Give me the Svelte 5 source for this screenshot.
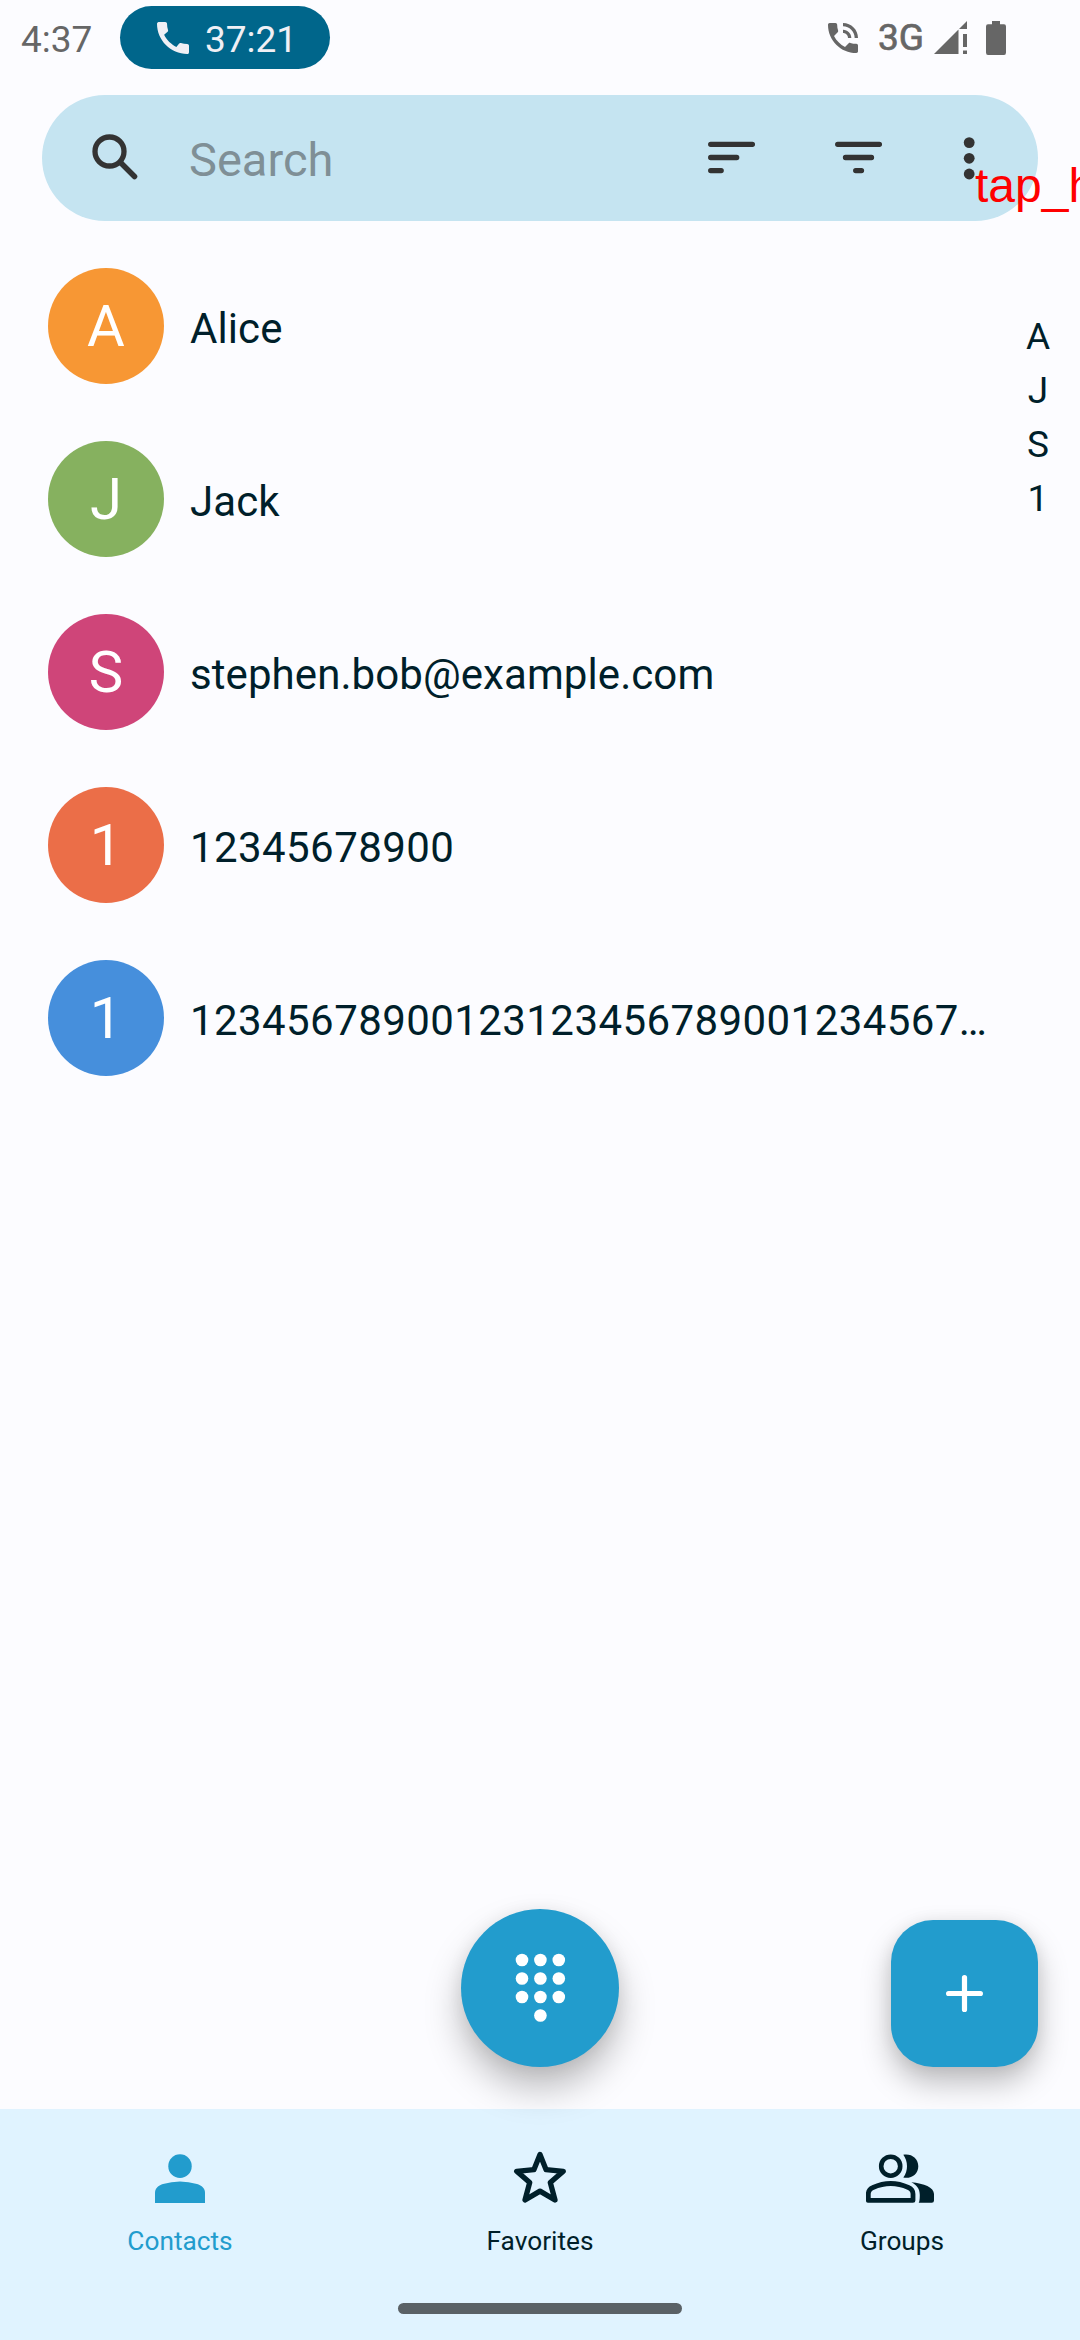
<script>
  const contacts = [
    { initial: 'A', name: 'Alice', tone: 'orange' },
    { initial: 'J', name: 'Jack', tone: 'green' },
    { initial: 'S', name: 'stephen.bob@example.com', tone: 'pink' },
    { initial: '1', name: '12345678900', tone: 'coral', numeric: true },
    { initial: '1', name: '12345678900123123456789001234567…', tone: 'blue', numeric: true }
  ];
  const letters = ['A', 'J', 'S', '1'];
  const keys = [
    [7, 7], [25.4, 7], [43.8, 7],
    [7, 25.5], [25.4, 25.5], [43.8, 25.5],
    [7, 44], [25.4, 44], [43.8, 44],
    [25.4, 62.5]
  ];
</script>

<div class="screen">
  <header class="status">
    <span class="time">4:37</span>
    <div class="call">
      <svg width="32" height="32" viewBox="3 3 18 18"><path fill="currentColor" d="M20.01 15.38c-1.23 0-2.42-.2-3.53-.56-.35-.12-.74-.03-1.01.24l-1.57 1.97c-2.83-1.35-5.48-3.9-6.89-6.83l1.95-1.66c.27-.28.35-.67.24-1.02-.37-1.11-.56-2.3-.56-3.53 0-.54-.45-.99-.99-.99H4.19C3.65 3 3 3.24 3 3.99 3 13.28 10.73 21 20.01 21c.71 0 .99-.63.99-1.18v-3.45c0-.54-.45-.99-.99-.99z"/></svg>
      <span>37:21</span>
    </div>
    <div class="signals">
      <svg class="wifi-call" width="30" height="30" viewBox="3 3 18 18"><path fill="currentColor" d="M20 15.5c-1.25 0-2.45-.2-3.57-.57-.1-.03-.21-.05-.31-.05-.26 0-.51.1-.71.29l-2.2 2.2c-2.83-1.44-5.15-3.75-6.59-6.59l2.2-2.21c.28-.26.36-.65.25-1C8.7 6.45 8.5 5.25 8.5 4c0-.55-.45-1-1-1H4c-.55 0-1 .45-1 1 0 9.39 7.61 17 17 17 .55 0 1-.45 1-1v-3.500c0-.55-.45-1-1-1zM12 3v2c3.860 0 7 3.140 7 7h2c0-4.970-4.030-9-9-9zm0 4v2c1.660 0 3 1.340 3 3h2c0-2.760-2.240-5-5-5z"/></svg>
      <span class="network">3G</span>
      <svg class="cell" width="33" height="33" viewBox="0 0 33 33"><path fill="currentColor" d="M0 33 24.500 8.500V33zM33 0v8h-8zM29 13h4v13h-4zM29 29.500h4V33h-4z"/></svg>
      <svg width="20" height="34" viewBox="0 0 20 34"><path fill="currentColor" d="M6 0h8v3.300h4Q20 3.300 20 5.500V31.500Q20 34 18 34H2Q0 34 0 31.500V5.500Q0 3.300 2 3.300h4z"/></svg>
    </div>
  </header>

  <div class="search">
    <svg class="glass" width="46" height="46" viewBox="0 0 46 46" fill="none" stroke="currentColor"><circle cx="17.500" cy="17.500" r="14.500" stroke-width="5.300"/><path d="M29.500 29.500 42.500 42.500" stroke-width="5.500" stroke-linecap="round"/></svg>
    <span class="placeholder">Search</span>
    <svg class="sort" width="48" height="34" viewBox="0 0 48 34" stroke="currentColor" stroke-width="5.300" stroke-linecap="round"><path d="M2.700 3.300H44.400M2.700 16.500H28.700M2.700 29.600H13.200"/></svg>
    <svg class="filter" width="48" height="34" viewBox="0 0 48 34" stroke="currentColor" stroke-width="5.300" stroke-linecap="round"><path d="M2.700 3.300H44.400M10.500 16.500H36.500M20.700 29.600H26.500"/></svg>
    <svg width="12" height="44" viewBox="0 0 12 44" fill="currentColor"><circle cx="6.200" cy="6.600" r="5.400"/><circle cx="6.200" cy="22.300" r="5.400"/><circle cx="6.200" cy="38" r="5.400"/></svg>
    <span class="hint">tap_h</span>
  </div>

  <main>
    <ul class="list">
      {#each contacts as c}
        <li>
          <span class="avatar {c.tone}">{c.initial}</span>
          <span class="name" class:numeric={c.numeric}>{c.name}</span>
        </li>
      {/each}
    </ul>
    <div class="index">
      {#each letters as l}<span>{l}</span>{/each}
    </div>
  </main>

  <div class="fabs">
    <button class="dial" aria-label="Dialpad">
      <svg width="51" height="70" viewBox="0 0 51 70" fill="#fff">
        {#each keys as [x, y]}<circle cx={x} cy={y} r="6.300"/>{/each}
      </svg>
    </button>
    <button class="add" aria-label="Add contact">
      <svg width="37" height="37" viewBox="0 0 37 37" stroke="#fff" stroke-width="5.200" stroke-linecap="round"><path d="M18.500 2.600V34.400M2.600 18.500H34.400"/></svg>
    </button>
  </div>

  <nav>
    <div class="tabs">
      <div class="tab active">
        <svg width="50" height="54" viewBox="0 0 50 54" fill="currentColor"><ellipse cx="25" cy="15.200" rx="11.700" ry="11.900"/><path d="M0 52V42C0 36.500 4 34.500 8 33Q25 28 42 33C46 34.500 50 36.500 50 42V52z"/></svg>
        <span>Contacts</span>
      </div>
      <div class="tab">
        <svg class="star" width="54" height="54" viewBox="0 0 54 54" fill="none" stroke="currentColor" stroke-width="5.300" stroke-linejoin="round"><path d="M27 3.500 33.100 18.700 50.300 20.300 37.300 31.500 42 49 27 40.100 12 49 16.700 31.500 3.700 20.300 20.900 18.700z"/></svg>
        <span>Favorites</span>
      </div>
      <div class="tab groups">
        <svg width="68" height="54" viewBox="0 0 68 54" fill="currentColor"><circle cx="24.700" cy="15.200" r="9.500" fill="none" stroke="currentColor" stroke-width="4.600"/><path d="M37.300 3.800C45.500 2.300 52.300 7.500 52.300 15.200S45.500 28.100 37.300 26.600Q41 21.500 41 15.200T37.300 3.800z"/><path d="M2.300 49.400V43Q2.300 38.500 7 36.500Q24.700 28.500 42.400 36.500Q47 38.500 47 43V49.400z" fill="none" stroke="currentColor" stroke-width="4.800" stroke-linejoin="round"/><path d="M45.300 31.300C58 32.500 68 36.500 68 43V49.500Q68 51.800 65.700 51.800H52.700Q53.800 50 53.800 44C53.800 37.500 50.500 34 45.300 31.300z"/></svg>
        <span>Groups</span>
      </div>
    </div>
    <div class="home"></div>
  </nav>
</div>

<style>
  :global(body) { margin: 0; overflow: hidden; }
  .screen {
    width: 1080px; height: 2340px; box-sizing: border-box; overflow: hidden;
    display: flex; flex-direction: column; background: #fcfcff; color: #001f2a;
    font-family: Roboto, "Liberation Sans", sans-serif;
  }
  svg { display: block; flex: none; }
  .status { height: 75px; display: flex; align-items: center; padding: 0 74px 0 21px; box-sizing: border-box; font-size: 37px; color: #666; }
  .time { width: 99px; padding-top: 3px; }
  .call { width: 210px; height: 63px; box-sizing: border-box; border-radius: 32px; background: #00668b; color: #f0f0f5; display: flex; align-items: center; padding: 0 0 0 37px; gap: 16px; }
  .call span { padding-top: 3px; }
  .signals { margin-left: auto; display: flex; align-items: center; }
  .network { -webkit-text-stroke: 0.7px currentColor; margin: 0 10px 0 20px; }
  .cell { margin-right: 19px; }
  .search { position: relative; flex: none; height: 126px; margin: 20px 42px 0; padding: 0 63px 0 50px; box-sizing: border-box; border-radius: 63px; background: #c5e4f1; color: #333; display: flex; align-items: center; }
  .glass { margin-bottom: 2px; }
  .placeholder { font-size: 47px; color: #7f8f96; margin-left: 51px; padding-top: 3px; }
  .sort { margin-left: auto; }
  .filter { margin: 0 80px 0 79px; }
  .hint { position: absolute; left: 933px; top: 64px; font: 48px/54px "Liberation Sans", Arial, sans-serif; color: #f00; white-space: nowrap; }
  main { flex: 1; display: flex; padding-top: 18px; min-height: 0; }
  .list { list-style: none; margin: 0; padding: 0 0 0 48px; width: 996px; box-sizing: border-box; }
  li { height: 173px; display: flex; align-items: center; gap: 26px; }
  .avatar { flex: none; width: 116px; height: 116px; border-radius: 50%; display: flex; align-items: center; justify-content: center; color: #fff; font-size: 58px; }
  .orange { background: #f79734; }
  .green { background: #86b15f; }
  .pink { background: #cf4579; }
  .coral { background: #eb6e48; }
  .blue { background: #468fdc; }
  .name { font-size: 42px; padding-top: 6px; white-space: nowrap; letter-spacing: 0.08px; }
  .numeric { letter-spacing: 0.42px; }
  .index { width: 84px; padding-top: 71px; display: flex; flex-direction: column; align-items: center; font-size: 37px; line-height: 54px; }
  .fabs { display: grid; grid-template-columns: 1fr auto 1fr; align-items: end; padding: 0 42px 42px; }
  button { border: 0; padding: 0; background: #229ccd; display: flex; align-items: center; justify-content: center; }
  .dial { grid-column: 2; width: 158px; height: 158px; border-radius: 50%; position: relative; z-index: 2; box-shadow: 0 21px 36px rgba(0,0,0,.26), 0 2px 18px rgba(0,0,0,.07); }
  .add { justify-self: end; width: 147px; height: 147px; border-radius: 42px; box-shadow: 0 16px 30px rgba(0,0,0,.25), 0 1px 16px rgba(0,0,0,.07); }
  nav { position: relative; z-index: 1; flex: none; height: 231px; background: #e0f3ff; box-sizing: border-box; padding: 42px 0 26px; display: flex; flex-direction: column; align-items: center; justify-content: space-between; }
  .tabs { width: 100%; display: grid; grid-template-columns: repeat(3, 1fr); }
  .tab { display: flex; flex-direction: column; align-items: center; gap: 19px; font-size: 26.25px; line-height: 34px; }
  .active { color: #229ccd; }
  .groups span { padding-left: 4px; }
  .home { width: 284px; height: 11px; border-radius: 6px; background: #5a6166; }
</style>
